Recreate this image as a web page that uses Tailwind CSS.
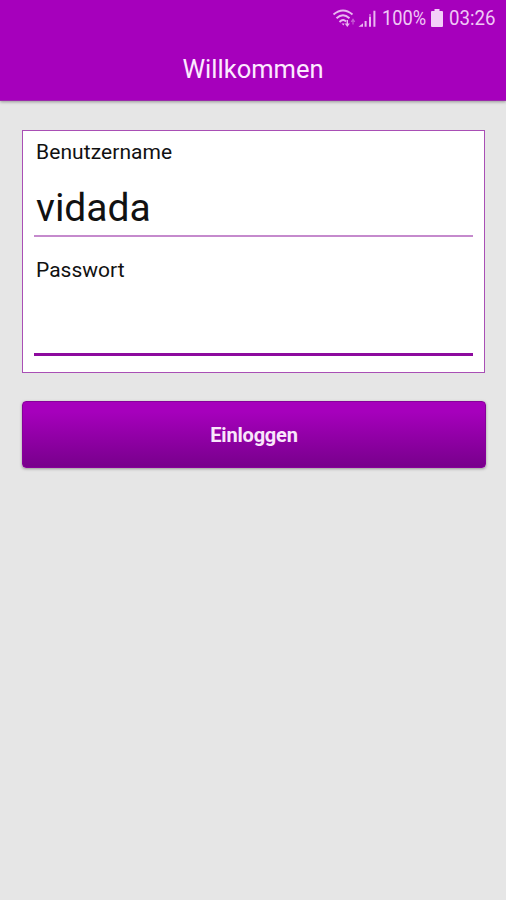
<!DOCTYPE html>
<html lang="de">
<head>
<meta charset="utf-8">
<title>Willkommen</title>
<script src="https://cdn.jsdelivr.net/npm/@tailwindcss/browser@4"></script>
</head>
<body class="w-[506px] h-[900px] overflow-hidden bg-[#e6e6e6] font-['Roboto',sans-serif] text-[#111]">
<header class="h-[101px] bg-[#a600bc] border-b border-[#9a2aaa] shadow-[0_1px_3px_rgba(0,0,0,0.35)]">
  <div class="h-[37px] pl-[332px] flex items-center text-[#f0c8f6]">
    <svg class="w-[49px] h-[26px] shrink-0" viewBox="0 0 49 26" fill="none" stroke="#e9b8f0">
      <path d="M1.500 8.500Q11 0.500 20.500 8.500M4.500 12.300Q11 6.300 17.500 12.300M7.500 16Q11 12.500 14 15.500" stroke-width="1.9"/>
      <path d="M9.500 17.500h3L11.500 19.500z" fill="#e9b8f0" stroke="none"/>
      <path d="M15.300 14v5" stroke-width="1.400"/><path d="M12.700 17.500h5.200L15.300 21z" fill="#e9b8f0" stroke="none"/>
      <path d="M21 13.500v5M19.300 15.800l1.700-2.400 1.700 2.400" stroke="#c65bd4" stroke-width="1.200"/>
      <path d="M26.500 20.800h4.500v-3.600z" fill="#e9b8f0" stroke="none"/>
      <path d="M33.600 15v5.800M38 11v9.800M42.400 4.800v16" stroke-width="2"/>
      <path d="M38 8v3" stroke="#c65bd4" stroke-width="2"/>
    </svg>
    <div class="w-[50px] shrink-0 pl-[1px]"><span class="inline-block origin-left scale-x-[0.87] text-[21px] leading-[26px] whitespace-nowrap">100%</span></div>
    <svg class="w-[12px] h-[18px] mb-[2px] shrink-0" viewBox="0 0 12 18" fill="#f3cff8"><path d="M3.500 0h5v2H11q1 0 1 1v14q0 1-1 1H1q-1 0-1-1V3q0-1 1-1h2.500z"/></svg>
    <div class="ml-[6px] w-[52px] shrink-0"><span class="inline-block origin-left scale-x-[0.89] text-[21px] leading-[26px] whitespace-nowrap">03:26</span></div>
  </div>
  <h1 class="h-[63px] pt-[2px] flex items-center justify-center text-[25.500px] leading-none text-[#fdeaff]">Willkommen</h1>
</header>
<main class="pt-[29px] pl-[22px]">
  <section class="w-[463px] h-[243px] bg-white border border-[#a94fb5] px-[11px] pt-[8px]">
    <label class="block h-[27px] pl-[2px] text-[21px] leading-[27px] tracking-[0.08px]">Benutzername</label>
    <div class="h-[71px] w-[439px] border-b-2 border-[#c58acd] pl-[2px] pt-[19px] text-[39px] leading-[46px]">vidada</div>
    <label class="block mt-[20px] h-[26px] pl-[2px] text-[21px] leading-[26px] tracking-[0.02px]">Passwort</label>
    <div class="h-[73px] w-[439px] border-b-[3px] border-[#8d0a9e]"></div>
  </section>
  <button class="mt-[28px] block w-[464px] h-[67px] rounded-[4px] border border-[#88009a] bg-linear-to-b from-[#a600bc] from-15% to-[#78008c] text-center text-[20px] font-bold leading-none tracking-[-0.2px] text-[#f9e6fb] shadow-[0_1px_3px_rgba(0,0,0,0.35)]">Einloggen</button>
</main>
</body>
</html>
